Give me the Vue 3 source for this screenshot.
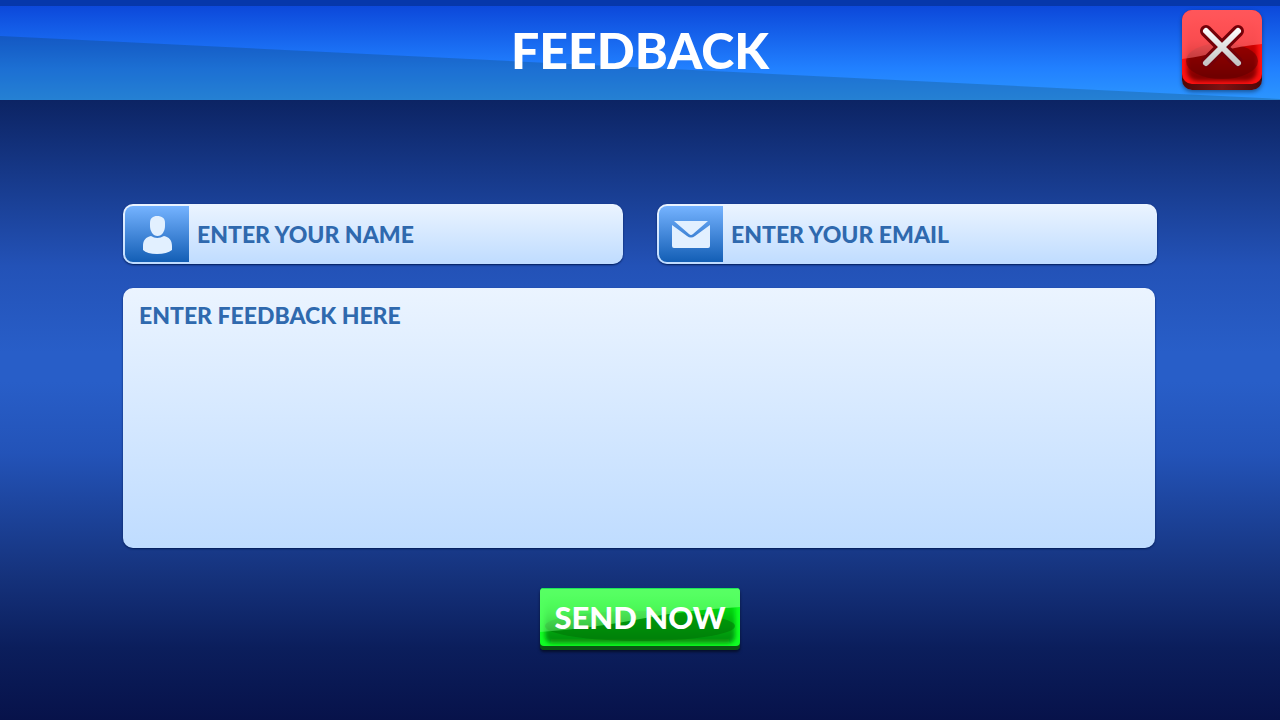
<script setup>
import { ref } from 'vue'

const name = ref('')
const email = ref('')
const message = ref('')
</script>

<template>
  <div class="screen">
    <header class="bar">
      <svg class="bar-shade" viewBox="0 0 1280 94" preserveAspectRatio="none" aria-hidden="true">
        <path d="M0 30L1280 93V94H0Z" fill="#0a2d22" fill-opacity=".2" />
      </svg>
      <h1>FEEDBACK</h1>
      <button class="close" type="button" aria-label="Close">
        <svg viewBox="0 0 80 80" aria-hidden="true">
          <defs>
            <linearGradient id="red-face" x1="0" y1="0" x2="0" y2="1">
              <stop offset="0" stop-color="#ff0505" />
              <stop offset=".45" stop-color="#c80000" />
              <stop offset="1" stop-color="#780000" />
            </linearGradient>
            <linearGradient id="red-glass" gradientUnits="userSpaceOnUse" x1="0" y1="0" x2="0" y2="49">
              <stop offset="0" stop-color="#ff5a5e" stop-opacity=".95" />
              <stop offset=".6" stop-color="#ff5a5e" stop-opacity=".85" />
              <stop offset="1" stop-color="#ff7478" stop-opacity=".5" />
            </linearGradient>
            <linearGradient id="red-base" x1="0" x2="1">
              <stop offset="0" stop-color="#4e0808" />
              <stop offset=".5" stop-color="#7e1212" />
              <stop offset="1" stop-color="#4e0808" />
            </linearGradient>
            <linearGradient id="cross-fill" gradientUnits="userSpaceOnUse" x1="0" y1="17" x2="0" y2="56">
              <stop offset="0" stop-color="#ffffff" />
              <stop offset="1" stop-color="#c2c2c2" />
            </linearGradient>
            <filter id="red-soft" x="-20%" y="-20%" width="140%" height="140%">
              <feGaussianBlur stdDeviation="2" />
            </filter>
            <clipPath id="red-clip"><rect width="80" height="74" rx="10" /></clipPath>
          </defs>
          <rect y="6" width="80" height="74" rx="10" fill="url(#red-base)" />
          <g clip-path="url(#red-clip)">
            <rect width="80" height="74" fill="#ff1111" />
            <rect x="5" y="10" width="70" height="61" rx="10" fill="url(#red-face)" filter="url(#red-soft)" />
            <ellipse cx="40" cy="51" rx="36" ry="18" fill="#5b0000" fill-opacity=".5" />
            <path d="M0 0H80V34Q58 36 40 41T0 49Z" fill="url(#red-glass)" />
          </g>
          <path d="M24 21L55 52M56 21L25 52" stroke="#750008" stroke-width="12" stroke-linecap="round" />
          <path d="M24 21L56 53M56 21L24 53" stroke="url(#cross-fill)" stroke-width="6" stroke-linecap="round" />
        </svg>
      </button>
    </header>

    <main>
      <form @submit.prevent>
        <div class="field">
          <label for="name" aria-label="Name">
            <svg viewBox="0 0 64 56" aria-hidden="true">
              <path d="M32 10C37 10 40 12 40 17V20C40 25 37 30 32.500 30C28 30 25 25 25 20V17C25 12 28 10 32 10Z" />
              <path d="M26 30Q32 34 39 30C44 31 47 34 47 40V44Q42 48 32 48T18 44V40C18 34 21 31 26 30Z" />
            </svg>
          </label>
          <input id="name" v-model="name" type="text" placeholder="ENTER YOUR NAME" />
        </div>
        <div class="field">
          <label for="email" aria-label="Email">
            <svg viewBox="0 0 64 56" aria-hidden="true">
              <path d="M15 15H49L34 28Q32 30 30 28Z" />
              <path d="M13 19L28 30Q32 33 36 30L51 19V40Q51 42 49 42H15Q13 42 13 40Z" />
            </svg>
          </label>
          <input id="email" v-model="email" type="email" placeholder="ENTER YOUR EMAIL" />
        </div>
        <textarea v-model="message" aria-label="Feedback" placeholder="ENTER FEEDBACK HERE"></textarea>
        <button class="send" type="submit">
          <svg viewBox="0 0 200 62" preserveAspectRatio="none" aria-hidden="true">
            <defs>
              <linearGradient id="green-face" x1="0" y1="0" x2="0" y2="1">
                <stop offset="0" stop-color="#00f510" />
                <stop offset=".45" stop-color="#00bc0a" />
                <stop offset="1" stop-color="#088a0a" />
              </linearGradient>
              <linearGradient id="green-glass" gradientUnits="userSpaceOnUse" x1="0" y1="0" x2="0" y2="44">
                <stop offset="0" stop-color="#5cff68" stop-opacity=".95" />
                <stop offset=".4" stop-color="#5cff68" stop-opacity=".85" />
                <stop offset="1" stop-color="#7cff86" stop-opacity=".4" />
              </linearGradient>
              <filter id="green-soft" x="-10%" y="-20%" width="120%" height="140%">
                <feGaussianBlur stdDeviation="2" />
              </filter>
              <clipPath id="green-clip"><rect width="200" height="58" rx="4" /></clipPath>
            </defs>
            <rect y="4" width="200" height="58" rx="4" fill="#0b5613" />
            <g clip-path="url(#green-clip)">
              <rect width="200" height="58" fill="#10ff24" />
              <rect x="5" y="10" width="190" height="45" rx="7" fill="url(#green-face)" filter="url(#green-soft)" />
              <ellipse cx="100" cy="38" rx="95" ry="15" fill="#006b05" fill-opacity=".45" />
              <path d="M0 0H200V19Q145 22 100 31T0 44Z" fill="url(#green-glass)" />
              <path d="M0 0H200" stroke="#1be75a" stroke-width="2" />
            </g>
          </svg>
          <span>SEND NOW</span>
        </button>
      </form>
    </main>
  </div>
</template>

<style>
body {
  margin: 0;
}
</style>

<style scoped>
.screen {
  box-sizing: border-box;
  min-height: 100vh;
  font-family: Lato, "Liberation Sans", sans-serif;
  background: linear-gradient(#06153f 0%, #0c2464 14%, #2352b7 37%, #285ec8 49%, #285ec8 53%, #2353b8 63%, #16347f 79%, #0b1e5c 90%, #07124a 100%);
}
.bar {
  box-sizing: border-box;
  position: relative;
  height: 100px;
  display: grid;
  grid-template-columns: 1fr auto 1fr;
  align-items: start;
  padding: 0 18px;
  border-top: 6px solid #0637aa;
  background: linear-gradient(#0c48da, #2180ff 66%, #2c96ff);
}
.bar-shade {
  position: absolute;
  inset: 0;
  width: 100%;
  height: 100%;
}
h1 {
  position: relative;
  grid-column: 2;
  margin: 12px 0 0;
  font-size: 50px;
  line-height: 64px;
  font-weight: 900;
  color: #fff;
}
button {
  padding: 0;
  border: 0;
  background: none;
  font-family: inherit;
  cursor: pointer;
}
.close {
  position: relative;
  justify-self: end;
  width: 80px;
  height: 80px;
  margin-top: 4px;
  border-radius: 10px;
  box-shadow: 0 2px 4px #0006;
}
.close svg {
  display: block;
  fill: none;
}
form {
  display: grid;
  grid-template-columns: 1fr 1fr;
  gap: 24px 34px;
  padding: 104px 123px 68px;
}
.field {
  box-sizing: border-box;
  display: flex;
  height: 60px;
  padding: 2px;
  border-radius: 10px;
  background: linear-gradient(#ebf4ff, #bfdcff);
  box-shadow: 0 1px 2px #001b55;
}
.field label {
  flex: 0 0 64px;
  border-radius: 8px 0 0 8px;
  background: linear-gradient(#75b3ff, #135eb5);
}
.field svg {
  display: block;
  fill: #e2f0ff;
}
input,
textarea {
  box-sizing: border-box;
  border: 0;
  outline: 0;
  font-family: inherit;
  font-size: 23px;
  line-height: 30px;
  font-weight: 900;
  color: #2f69ae;
}
input {
  flex: 1;
  min-width: 0;
  padding: 0 8px;
  background: none;
}
input::placeholder,
textarea::placeholder {
  color: #2f69ae;
  opacity: 1;
}
textarea {
  grid-column: 1 / -1;
  display: block;
  width: calc(100% - 2px);
  height: 260px;
  padding: 12px 16px;
  resize: none;
  border-radius: 10px;
  background: linear-gradient(#ebf4ff, #bfdcff);
  box-shadow: 0 1px 2px #001b55;
}
.send {
  position: relative;
  grid-column: 1 / -1;
  justify-self: center;
  width: 200px;
  height: 62px;
  margin-top: 16px;
  padding-bottom: 4px;
  border-radius: 4px;
  box-shadow: 0 2px 3px #0008;
}
.send svg {
  position: absolute;
  inset: 0;
  width: 100%;
  height: 100%;
}
.send span {
  position: relative;
  font-size: 31px;
  line-height: 40px;
  font-weight: 900;
  color: #fff;
}
</style>
